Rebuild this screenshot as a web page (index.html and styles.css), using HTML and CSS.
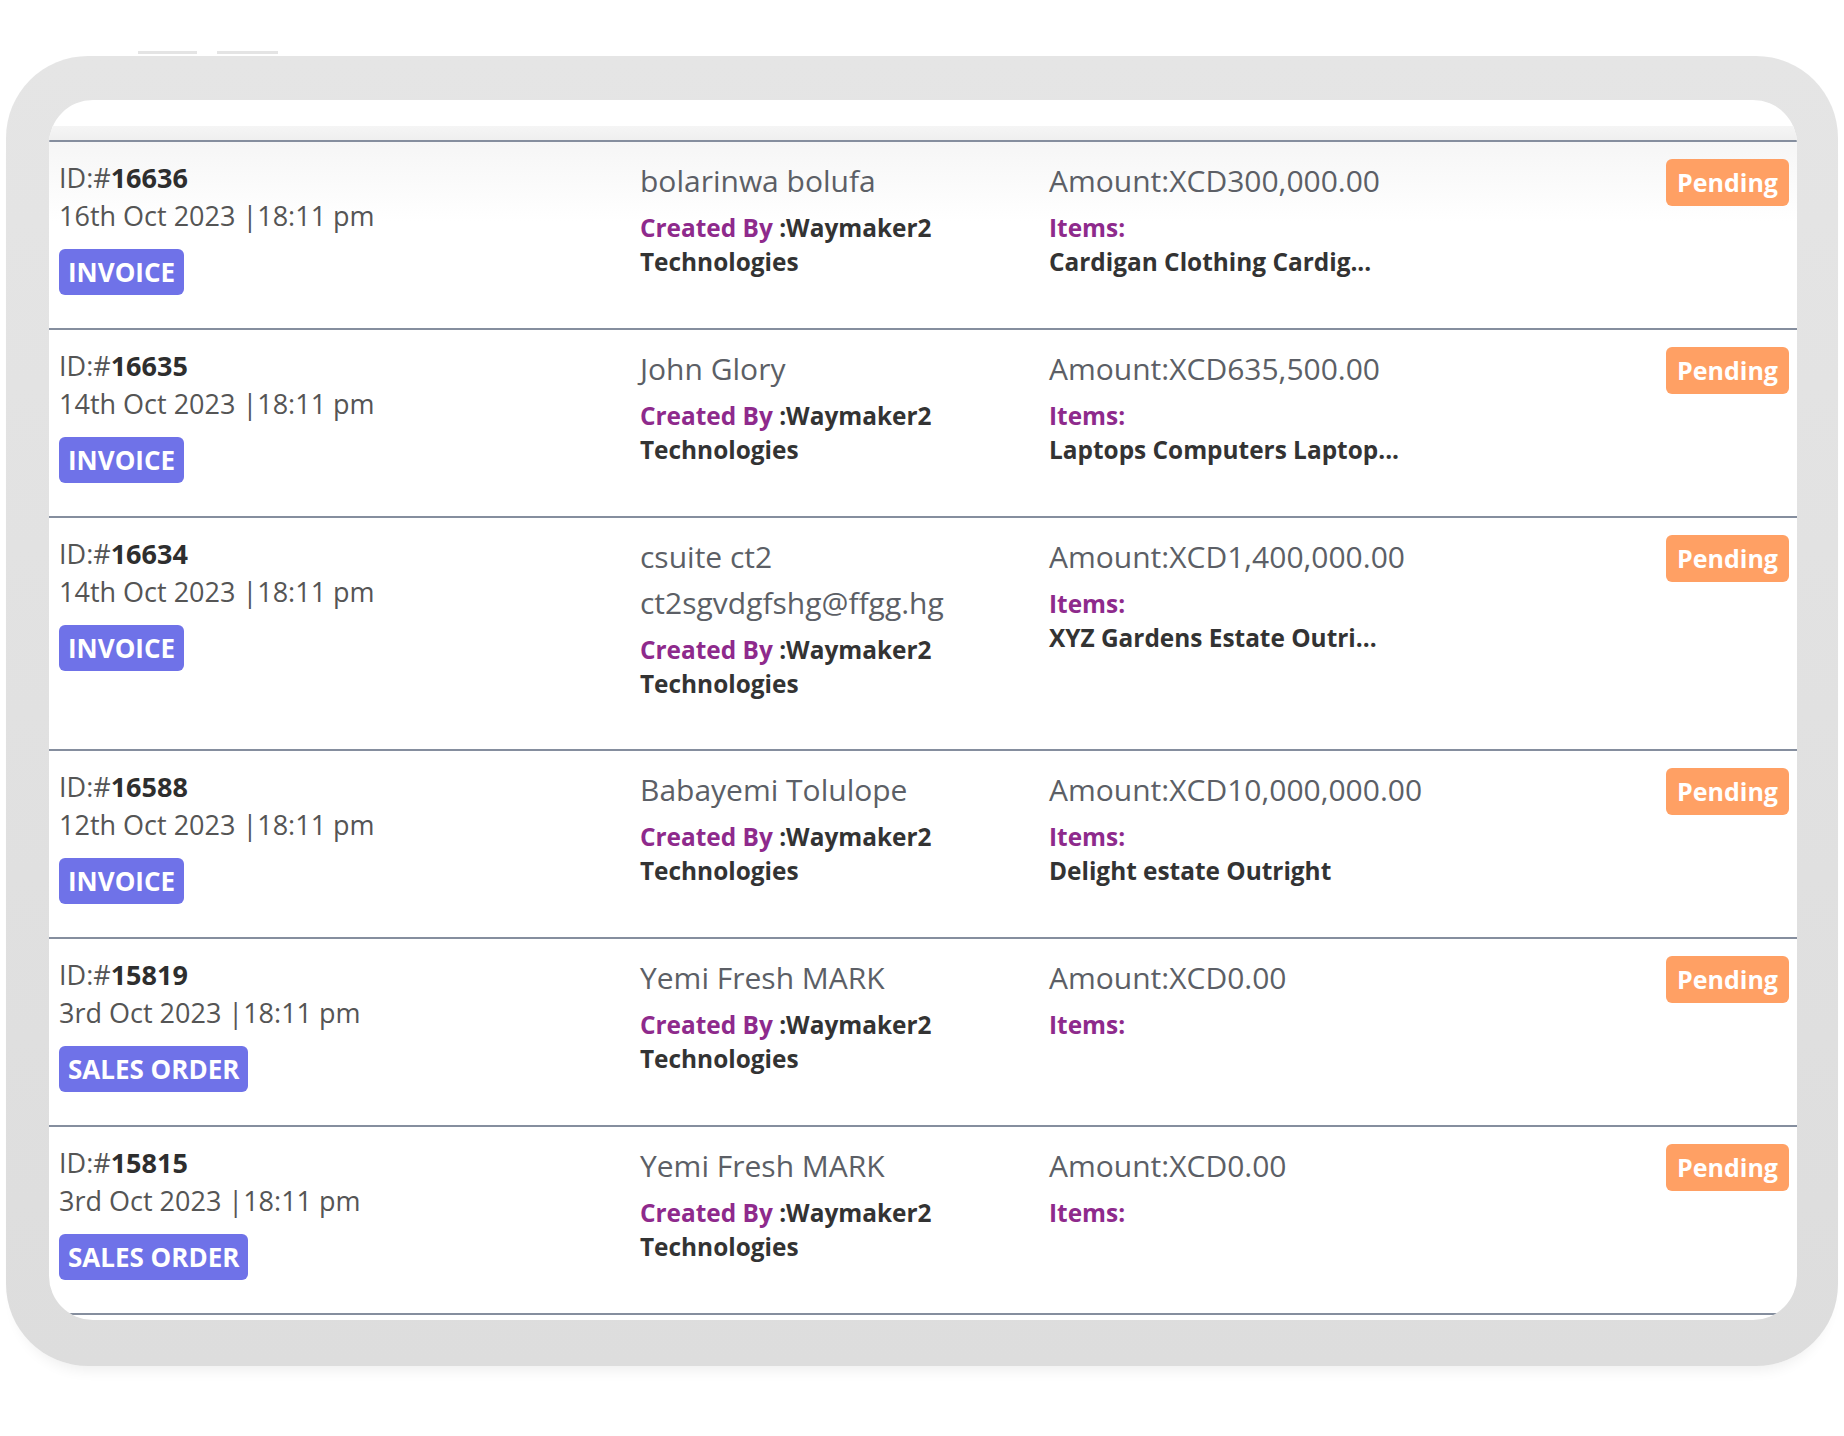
FILE: index.html
```html
<!DOCTYPE html>
<html>
<head>
    <meta charset="UTF-8">
    <title>Orders</title>
    <link rel="stylesheet" href="styles.css">
</head>
<body>
    <div class="device-keys">
        <div class="device-key"></div>
        <div class="device-key"></div>
    </div>
    <div class="device">
        <div class="screen">
            <div class="screen-top"></div>
            <div class="screen-head"></div>
            <div class="order-list">
                <div class="order-row first">
                    <div class="order-left">
                        <div class="order-id">ID:#<b>16636</b></div>
                        <div class="order-date">16th Oct 2023 |18:11 pm</div>
                        <div class="order-type">INVOICE</div>
                    </div>
                    <div class="order-middle">
                        <div class="order-name">bolarinwa bolufa</div>
                        <div class="order-label"><span class="label-key">Created By</span> :Waymaker2 Technologies</div>
                    </div>
                    <div class="order-amount">
                        <div class="amount-text">Amount:XCD300,000.00</div>
                        <div class="order-label"><span class="label-key">Items:</span></div>
                        <div class="order-label">Cardigan Clothing Cardig...</div>
                    </div>
                    <div class="order-status">Pending</div>
                </div>
                <div class="order-row">
                    <div class="order-left">
                        <div class="order-id">ID:#<b>16635</b></div>
                        <div class="order-date">14th Oct 2023 |18:11 pm</div>
                        <div class="order-type">INVOICE</div>
                    </div>
                    <div class="order-middle">
                        <div class="order-name">John Glory</div>
                        <div class="order-label"><span class="label-key">Created By</span> :Waymaker2 Technologies</div>
                    </div>
                    <div class="order-amount">
                        <div class="amount-text">Amount:XCD635,500.00</div>
                        <div class="order-label"><span class="label-key">Items:</span></div>
                        <div class="order-label">Laptops Computers Laptop...</div>
                    </div>
                    <div class="order-status">Pending</div>
                </div>
                <div class="order-row">
                    <div class="order-left">
                        <div class="order-id">ID:#<b>16634</b></div>
                        <div class="order-date">14th Oct 2023 |18:11 pm</div>
                        <div class="order-type">INVOICE</div>
                    </div>
                    <div class="order-middle">
                        <div class="order-name">csuite ct2</div>
                        <div class="order-name">ct2sgvdgfshg@ffgg.hg</div>
                        <div class="order-label"><span class="label-key">Created By</span> :Waymaker2 Technologies</div>
                    </div>
                    <div class="order-amount">
                        <div class="amount-text">Amount:XCD1,400,000.00</div>
                        <div class="order-label"><span class="label-key">Items:</span></div>
                        <div class="order-label">XYZ Gardens Estate Outri...</div>
                    </div>
                    <div class="order-status">Pending</div>
                </div>
                <div class="order-row">
                    <div class="order-left">
                        <div class="order-id">ID:#<b>16588</b></div>
                        <div class="order-date">12th Oct 2023 |18:11 pm</div>
                        <div class="order-type">INVOICE</div>
                    </div>
                    <div class="order-middle">
                        <div class="order-name">Babayemi Tolulope</div>
                        <div class="order-label"><span class="label-key">Created By</span> :Waymaker2 Technologies</div>
                    </div>
                    <div class="order-amount">
                        <div class="amount-text">Amount:XCD10,000,000.00</div>
                        <div class="order-label"><span class="label-key">Items:</span></div>
                        <div class="order-label">Delight estate Outright</div>
                    </div>
                    <div class="order-status">Pending</div>
                </div>
                <div class="order-row">
                    <div class="order-left">
                        <div class="order-id">ID:#<b>15819</b></div>
                        <div class="order-date">3rd Oct 2023 |18:11 pm</div>
                        <div class="order-type">SALES ORDER</div>
                    </div>
                    <div class="order-middle">
                        <div class="order-name">Yemi Fresh MARK</div>
                        <div class="order-label"><span class="label-key">Created By</span> :Waymaker2 Technologies</div>
                    </div>
                    <div class="order-amount">
                        <div class="amount-text">Amount:XCD0.00</div>
                        <div class="order-label"><span class="label-key">Items:</span></div>
                    </div>
                    <div class="order-status">Pending</div>
                </div>
                <div class="order-row last">
                    <div class="order-left">
                        <div class="order-id">ID:#<b>15815</b></div>
                        <div class="order-date">3rd Oct 2023 |18:11 pm</div>
                        <div class="order-type">SALES ORDER</div>
                    </div>
                    <div class="order-middle">
                        <div class="order-name">Yemi Fresh MARK</div>
                        <div class="order-label"><span class="label-key">Created By</span> :Waymaker2 Technologies</div>
                    </div>
                    <div class="order-amount">
                        <div class="amount-text">Amount:XCD0.00</div>
                        <div class="order-label"><span class="label-key">Items:</span></div>
                    </div>
                    <div class="order-status">Pending</div>
                </div>
            </div>
        </div>
    </div>
</body>
</html>
```

FILE: styles.css
```css
*{
    margin: 0;
    padding: 0;
    box-sizing: border-box;
    font-family: "Open Sans", "Noto Sans", Arial, sans-serif;
}
html,body{
    width: 100%;
    height: 100%;
    background-color: #ffffff;
}
.device-keys{
    display: flex;
    gap: 20px;
    padding: 51px 0 0 138px;
}
.device-key{
    width: 59px;
    height: 3px;
    background-color: #e4e4e4;
}
.device-key + .device-key{
    width: 61px;
}
.device{
    width: 1832px;
    margin: 2px 0 0 6px;
    padding: 44px 41px 46px 43px;
    background: linear-gradient(#e5e5e5, #dddddd);
    border-radius: 82px;
    box-shadow: 0 14px 14px -10px rgba(0, 0, 0, 0.07);
}
.screen{
    height: 1220px;
    background-color: #ffffff;
    border-radius: 44px;
    overflow: hidden;
}
.screen-top{
    height: 26px;
}
.screen-head{
    height: 14px;
    background: linear-gradient(#f5f5f5, #efefef);
}
.order-row{
    display: grid;
    grid-template-columns: 581px 409px 1fr auto;
    padding: 16px 8px 33px 10px;
    border-top: 2px solid #858e9e;
}
.order-row.first{
    background: linear-gradient(#f6f6f6, #ffffff 80px);
}
.order-row.last{
    border-bottom: 2px solid #858e9e;
}
.order-left{
    line-height: 0;
}
.order-middle{
    padding-bottom: 15px;
}
.order-id,
.order-date{
    font-size: 27px;
    line-height: 38px;
    color: #555555;
}
.order-id{
    margin-top: 1px;
}
.order-id b{
    color: #2e2e2e;
    font-weight: 700;
}
.order-type{
    display: inline-block;
    margin-top: 14px;
    padding: 0 9px;
    height: 46px;
    line-height: 46px;
    font-size: 26px;
    font-weight: 700;
    color: #ffffff;
    background-color: #6f72e8;
    border-radius: 6px;
}
.order-name,
.amount-text{
    font-size: 30px;
    line-height: 46px;
    color: #5c5f66;
}
.order-name + .order-label,
.amount-text + .order-label{
    margin-top: 7px;
}
.order-label{
    font-size: 24.4px;
    line-height: 34px;
    font-weight: 700;
    color: #333333;
}
.label-key{
    color: #8e2a8c;
}
.order-status{
    align-self: start;
    margin-top: 1px;
    padding: 0 11px;
    height: 47px;
    line-height: 46px;
    font-size: 25px;
    font-weight: 700;
    color: #ffffff;
    background-color: #ffa064;
    border-radius: 6px;
}
```
